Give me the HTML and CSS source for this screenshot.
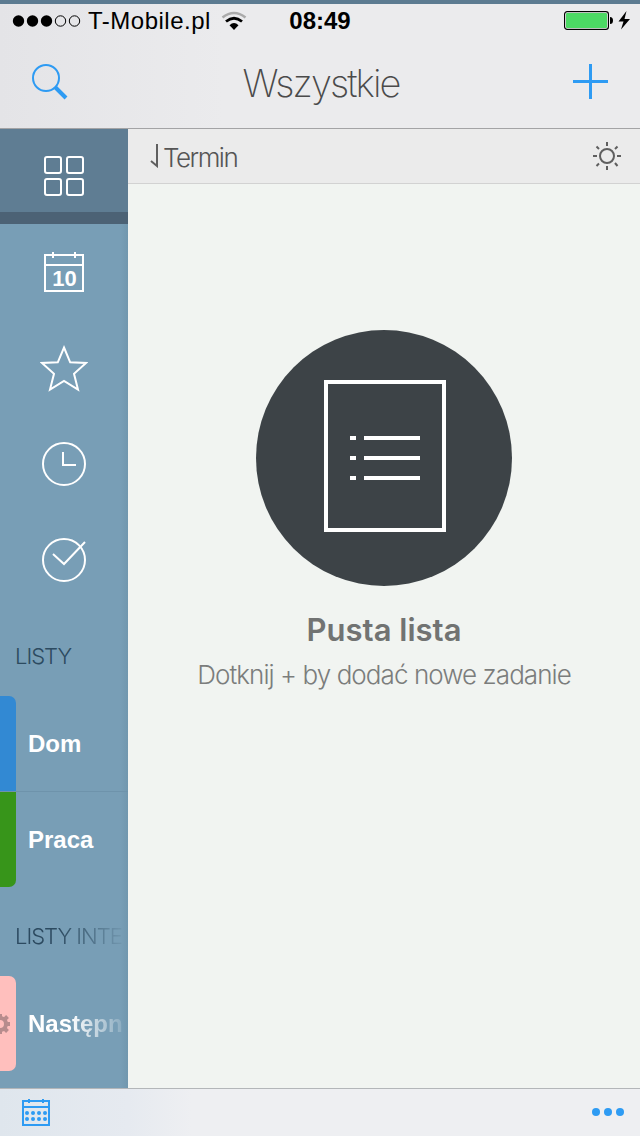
FILE: index.html
```html
<!DOCTYPE html>
<html lang="pl">
<head>
    <meta charset="UTF-8">
    <meta name="viewport" content="width=device-width, initial-scale=1.0">
    <title>Wszystkie</title>
    <link rel="stylesheet" href="styles.css">
</head>
<body>
    <header class="header">
        <!-- Status bar -->
        <div class="status">
            <div class="status-left">
                <svg class="signal" width="70" height="14" viewBox="0 0 70 14">
                    <circle cx="6.5" cy="7" r="5.7"/>
                    <circle cx="20.5" cy="7" r="5.7"/>
                    <circle cx="34.5" cy="7" r="5.7"/>
                    <circle class="empty" cx="48.5" cy="7" r="5.2"/>
                    <circle class="empty" cx="62.5" cy="7" r="5.2"/>
                </svg>
                <span class="carrier">T-Mobile.pl</span>
                <svg class="wifi" width="26" height="20" viewBox="0 0 26 20">
                    <path d="M1.500 6.500Q13 -2.500 24.500 6.500" stroke="#aaa" stroke-width="2.600" fill="none"/>
                    <path d="M5 10.500Q13 4 21 10.500" stroke="#000" stroke-width="2.800" fill="none"/>
                    <path d="M8.500 14.200Q13 10 17.500 14.200L13 19z"/>
                </svg>
            </div>
            <span class="time">08:49</span>
            <div class="status-right">
                <svg width="68" height="20" viewBox="0 0 68 20">
                    <rect x=".6" y=".6" width="43.800" height="17.800" rx="2.600" fill="#fff" stroke="#000" stroke-width="1.200"/>
                    <rect x="2" y="2" width="41" height="15" rx="1" fill="#4cd964"/>
                    <path d="M46 6q3 0 3 3.500t-3 3.500z"/>
                    <path d="M62.500 0L54.500 10.500h5L57 18.500L66 8h-5.500z"/>
                </svg>
            </div>
        </div>

        <!-- Navigation bar -->
        <div class="navbar">
            <svg width="38" height="38" viewBox="0 0 38 38" fill="none" stroke="#2e9bf3">
                <circle cx="15" cy="15" r="13" stroke-width="2"/>
                <path d="M24.500 24.500L35 35" stroke-width="4"/>
            </svg>
            <h1 class="title">Wszystkie</h1>
            <svg width="36" height="38" viewBox="0 0 36 38" fill="none" stroke="#2e9bf3" stroke-width="3">
                <path d="M0 18.500H35M17.500 1V36"/>
            </svg>
        </div>
    </header>

    <div class="main">
        <nav class="sidebar">
            <div class="tab active">
                <svg width="40" height="40" viewBox="0 0 40 40">
                    <rect x="1" y="1" width="16" height="16" rx="2"/>
                    <rect x="23" y="1" width="16" height="16" rx="2"/>
                    <rect x="1" y="23" width="16" height="16" rx="2"/>
                    <rect x="23" y="23" width="16" height="16" rx="2"/>
                </svg>
            </div>
            <div class="tab">
                <svg width="40" height="40" viewBox="0 0 40 40">
                    <path d="M1 3H39V39H1zM1 13H39M9 0V6M31 0V6"/>
                    <text class="day" x="20.500" y="34" text-anchor="middle">10</text>
                </svg>
            </div>
            <div class="tab">
                <svg width="48" height="48" viewBox="0 0 48 48">
                    <path d="M24 3.500L30.200 18.300L46 19L34 29.800L38 45.500L24 37L10 45.500L14 29.800L2 19L17.800 18.300z"/>
                </svg>
            </div>
            <div class="tab">
                <svg width="44" height="44" viewBox="0 0 44 44">
                    <circle cx="22" cy="22" r="21"/>
                    <path d="M21 10V23H34"/>
                </svg>
            </div>
            <div class="tab">
                <svg width="44" height="44" viewBox="0 0 44 44">
                    <circle cx="22" cy="22" r="21"/>
                    <path d="M11 16L22 26L43 4"/>
                </svg>
            </div>

            <h2 class="section">LISTY</h2>
            <div class="list-item">
                <div class="marker blue first"></div>
                <span class="list-name">Dom</span>
            </div>
            <div class="list-item last-item">
                <div class="marker green last"></div>
                <span class="list-name">Praca</span>
            </div>
            <h2 class="section fade">LISTY INTE</h2>
            <div class="list-item last-item">
                <div class="marker pink first last">
                    <svg width="10" height="22" viewBox="0 0 10 22">
                        <circle cx="0" cy="11" r="6" fill="none" stroke="#b78c8d" stroke-width="4"/>
                        <path d="M7 11H10M4.500 6.500L7.500 3.500M4.500 15.500L7.500 18.500M0 1V5M0 17V21" stroke="#b78c8d" stroke-width="4"/>
                    </svg>
                </div>
                <span class="list-name fade">Następn</span>
            </div>
        </nav>

        <section class="content">
            <div class="sortbar">
                <svg width="9" height="24" viewBox="0 0 9 24" fill="none" stroke="#5f5f5f" stroke-width="2">
                    <path d="M7 0V22L1 17"/>
                </svg>
                <span class="sort-name">Termin</span>
                <svg class="sun" width="28" height="28" viewBox="0 0 28 28" fill="none" stroke="#5f5f5f" stroke-width="2">
                    <circle cx="14" cy="14" r="7"/>
                    <path d="M14 0V4M14 24V28M0 14H4M24 14H28M3.500 4.500L6 7M22 21L24.500 24M24.500 4.500L22 7M6 21.500L3.500 24"/>
                </svg>
            </div>
            <div class="empty-state">
                <svg width="256" height="256" viewBox="0 0 256 256">
                    <circle cx="128" cy="128" r="128" fill="#3d4347"/>
                    <path d="M70 52H188V200H70z" fill="none" stroke="#fff" stroke-width="4"/>
                    <path d="M94 108h6M108 108h56M94 128h6M108 128h56M94 148h6M108 148h56" stroke="#fff" stroke-width="4"/>
                </svg>
                <p class="empty-title">Pusta lista</p>
                <p class="empty-hint">Dotknij + by dodać nowe zadanie</p>
            </div>
        </section>
    </div>

    <footer class="toolbar">
        <svg width="28" height="28" viewBox="0 0 28 28" fill="none" stroke="#2e9bf3" stroke-width="2">
            <path d="M1 3H27V27H1zM1 9H27M7 1V5M21 1V5"/>
            <path d="M5 15h.01M11 15h.01M17 15h.01M23 15h.01M5 21h.01M11 21h.01M17 21h.01M23 21h.01" stroke-width="4" stroke-linecap="round"/>
        </svg>
        <svg width="32" height="8" viewBox="0 0 32 8" fill="#2e9bf3">
            <circle cx="4" cy="4" r="4"/>
            <circle cx="16" cy="4" r="4"/>
            <circle cx="28" cy="4" r="4"/>
        </svg>
    </footer>
</body>
</html>
```
FILE: styles.css
```css
* {
    box-sizing: border-box;
}
body {
    margin: 0;
    width: 640px;
    height: 1136px;
    display: flex;
    flex-direction: column;
    overflow: hidden;
    font-family: Inter, 'Liberation Sans', sans-serif;
    background-color: #f1f4f1;
}
h1, h2, p {
    margin: 0;
    white-space: nowrap;
}
svg {
    display: block;
    flex-shrink: 0;
}

/* Header */
.header {
    height: 129px;
    border-top: 4px solid #5c7b91;
    border-bottom: 1px solid #a3a3a5;
    background: linear-gradient(90deg, #e4e4e7, #ebebed 35%);
}
.status {
    height: 33px;
    display: grid;
    grid-template-columns: 1fr auto 1fr;
    align-items: center;
    padding: 0 8px 0 12px;
    font-family: 'Liberation Sans', sans-serif;
    font-size: 24px;
    line-height: 33px;
}
.status-left {
    display: flex;
    align-items: center;
}
.signal .empty {
    fill: none;
    stroke: #000;
}
.carrier {
    margin-left: 6px;
    letter-spacing: 0.5px;
}
.wifi {
    margin-left: 10px;
}
.time {
    margin-right: 4px;
    font-weight: bold;
}
.status-right {
    display: flex;
    justify-content: flex-end;
}
.navbar {
    height: 89px;
    display: flex;
    justify-content: space-between;
    align-items: center;
    padding: 0 31px 0 31px;
}
.title {
    padding-top: 2px;
    font-size: 38px;
    font-weight: 200;
    letter-spacing: -1.9px;
    color: #4a4a4a;
}

/* Sidebar */
.main {
    flex: 1;
    display: flex;
    min-height: 0;
}
.sidebar {
    width: 128px;
    flex-shrink: 0;
    overflow: hidden;
    background: linear-gradient(90deg, #789eb6, #789eb6 94%, #7197ae);
}
.tab {
    height: 96px;
    display: flex;
    justify-content: center;
    align-items: center;
    fill: none;
    stroke: #fff;
    stroke-width: 2;
}
.tab.active {
    height: 95px;
    padding-top: 11px;
    background-color: #5f7d93;
    border-bottom: 12px solid #4c6275;
}
.day {
    font-family: 'Liberation Sans', sans-serif;
    font-size: 22px;
    font-weight: bold;
    fill: #fff;
    stroke: none;
}
.section {
    height: 88px;
    padding-left: 15px;
    line-height: 97px;
    font-size: 22px;
    font-weight: 300;
    letter-spacing: -1px;
    color: #2c4a60;
}
.list-item {
    height: 96px;
    display: flex;
    align-items: center;
    border-bottom: 1px solid #6e93ab;
}
.last-item {
    border-bottom-color: transparent;
}
.marker {
    width: 16px;
    height: 95px;
    flex-shrink: 0;
    display: flex;
    align-items: center;
}
.marker.first {
    border-top-right-radius: 7px;
}
.marker.last {
    border-bottom-right-radius: 7px;
}
.blue { background-color: #3289d3; }
.green { background-color: #37951a; }
.pink { background-color: #ffbfbd; }
.list-name {
    padding-left: 12px;
    font-family: 'Liberation Sans', sans-serif;
    font-size: 24px;
    font-weight: bold;
    color: #fff;
}
.fade {
    -webkit-mask-image: linear-gradient(90deg, #000 50%, transparent 108%);
    mask-image: linear-gradient(90deg, #000 50%, transparent 108%);
}
.section.fade {
    -webkit-mask-image: linear-gradient(90deg, #000 45%, transparent);
    mask-image: linear-gradient(90deg, #000 45%, transparent);
}

/* Content */
.content {
    flex: 1;
}
.sortbar {
    height: 55px;
    display: flex;
    align-items: center;
    padding: 0 19px 0 22px;
    background-color: #ebebeb;
    border-bottom: 1px solid #d2d2d2;
}
.sort-name {
    margin-left: 4px;
    padding-top: 2px;
    font-size: 26px;
    font-weight: 300;
    letter-spacing: -1.5px;
    color: #555;
}
.sun {
    margin-left: auto;
}
.empty-state {
    display: flex;
    flex-direction: column;
    align-items: center;
    padding-top: 146px;
}
.empty-title {
    margin-top: 24px;
    font-size: 31px;
    font-weight: 600;
    line-height: 40px;
    color: #717372;
}
.empty-hint {
    margin-top: 8px;
    font-size: 26px;
    font-weight: 300;
    line-height: 34px;
    letter-spacing: -0.93px;
    color: #7b7d7c;
}

/* Bottom toolbar */
.toolbar {
    height: 48px;
    display: flex;
    justify-content: space-between;
    align-items: center;
    padding: 0 16px 1px 22px;
    border-top: 1px solid #b3b6b9;
    background: linear-gradient(90deg, #dfe6ed, #e6eaf0 20%, #eeeff2 30%);
}
```
